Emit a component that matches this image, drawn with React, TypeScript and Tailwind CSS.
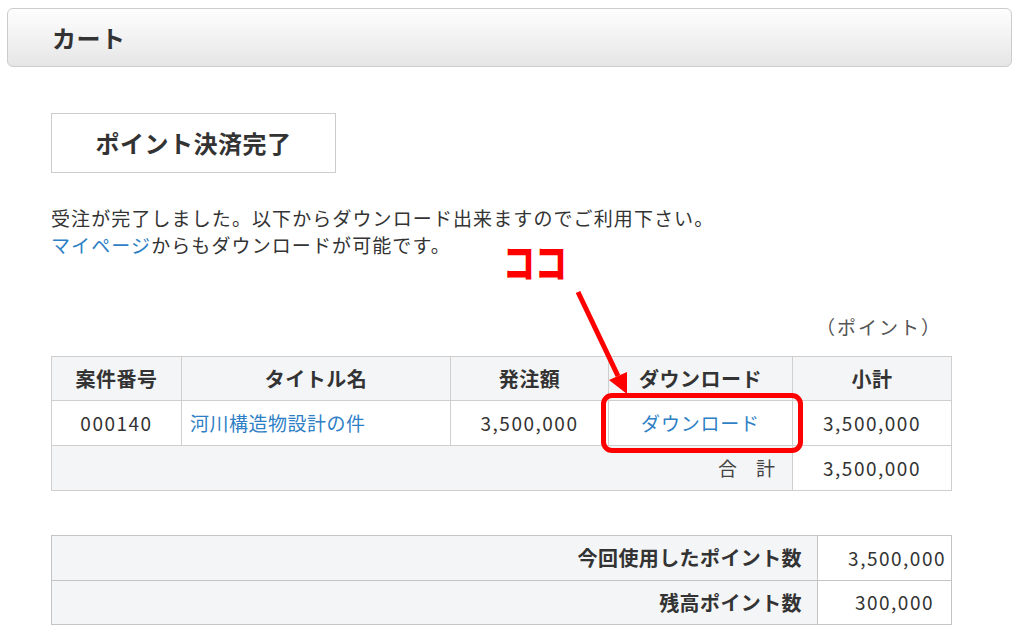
import React from "react";

const font = { fontFamily: '"Noto Sans CJK JP", "Noto Sans", sans-serif' };

export default function App() {
  return (
    <div
      className="relative w-[1019px] h-[640px] overflow-hidden bg-white text-[#333333]"
      style={font}
    >
      {/* header bar */}
      <div className="mx-[7px] mt-[8px] h-[59px] rounded-[6px] border border-[#cccccc] bg-gradient-to-b from-[#fefefe] to-[#e6e6e6] flex items-center pl-[44px]">
        <span className="text-[24px] font-bold text-[#333333] leading-none tracking-[0.5px]">カート</span>
      </div>

      <div className="pl-[51px] w-[951px]">
        {/* title box */}
        <div className="mt-[46px] w-[285px] h-[60px] border border-[#cccccc] flex items-center justify-center">
          <span className="text-[24px] font-bold leading-none tracking-[0.5px]">ポイント決済完了</span>
        </div>

        {/* message */}
        <p className="mt-[31px] text-[19px] leading-[27px] tracking-[1.1px]">
          受注が完了しました。以下からダウンロード出来ますのでご利用下さい。
          <br />
          <span className="text-[#2e7fc5]">マイページ</span>からもダウンロードが可能です。
        </p>

        {/* unit */}
        <div className="mt-[55px] pr-[9px] text-right text-[19px] leading-[28px] tracking-[2px] text-[#555555]">
          （ポイント）
        </div>

        {/* main table */}
        <table className="mt-[15px] w-[900px] border-collapse text-[19px] table-fixed">
          <colgroup>
            <col className="w-[130px]" />
            <col className="w-[269px]" />
            <col className="w-[158px]" />
            <col className="w-[184px]" />
            <col className="w-[159px]" />
          </colgroup>
          <thead>
            <tr className="h-[44px] bg-[#f4f5f7] text-[20px] tracking-[0.5px]">
              <th className="border border-[#cfcfcf] font-bold">案件番号</th>
              <th className="border border-[#cfcfcf] font-bold">タイトル名</th>
              <th className="border border-[#cfcfcf] font-bold">発注額</th>
              <th className="border border-[#cfcfcf] font-bold">ダウンロード</th>
              <th className="border border-[#cfcfcf] font-bold">小計</th>
            </tr>
          </thead>
          <tbody>
            <tr className="h-[45px]">
              <td className="border border-[#cfcfcf] text-center tracking-[1.5px]">000140</td>
              <td className="border border-[#cfcfcf] pl-[8px] text-[#2e7fc5] tracking-[0.5px]">河川構造物設計の件</td>
              <td className="border border-[#cfcfcf] text-center tracking-[1.5px]">3,500,000</td>
              <td className="border border-[#cfcfcf] text-center text-[#2e7fc5] tracking-[0.8px]">ダウンロード</td>
              <td className="border border-[#cfcfcf] text-center tracking-[1.5px]">3,500,000</td>
            </tr>
            <tr className="h-[45px]">
              <td colSpan={4} className="border border-[#cfcfcf] bg-[#f4f5f7] text-right pr-[17px] text-[#444444]">
                合　計
              </td>
              <td className="border border-[#cfcfcf] text-center tracking-[1.5px]">3,500,000</td>
            </tr>
          </tbody>
        </table>

        {/* points table */}
        <table className="mt-[44px] w-[900px] border-collapse text-[19px] table-fixed">
          <colgroup>
            <col className="w-[766px]" />
            <col className="w-[134px]" />
          </colgroup>
          <tbody>
            <tr className="h-[45px]">
              <th className="border border-[#c4c4c4] bg-[#f4f5f7] text-right pr-[15px] font-bold text-[20px] tracking-[0.4px]">
                今回使用したポイント数
              </th>
              <td className="border border-[#c4c4c4] text-right pr-[5px] tracking-[1.5px]">3,500,000</td>
            </tr>
            <tr className="h-[44px]">
              <th className="border border-[#c4c4c4] bg-[#f4f5f7] text-right pr-[15px] font-bold text-[20px] tracking-[0.4px]">
                残高ポイント数
              </th>
              <td className="border border-[#c4c4c4] text-right pr-[17px] tracking-[1.5px]">300,000</td>
            </tr>
          </tbody>
        </table>
      </div>

      {/* annotation: ココ */}
      <div className="absolute left-[503px] top-[240px] text-[32px] font-black leading-none text-[#ff0000] scale-y-[1.25] origin-top">
        ココ
      </div>

      {/* annotation arrow */}
      <svg className="absolute left-0 top-0 pointer-events-none" width="1019" height="640">
        <line x1="578" y1="292" x2="618" y2="376" stroke="#ff0000" strokeWidth="5" />
        <polygon points="627,394 609,380 627,372" fill="#ff0000" />
      </svg>

      {/* annotation box */}
      <div className="absolute left-[601px] top-[393px] w-[202px] h-[60px] border-[5px] border-[#ff0000] rounded-[11px]" />
    </div>
  );
}
